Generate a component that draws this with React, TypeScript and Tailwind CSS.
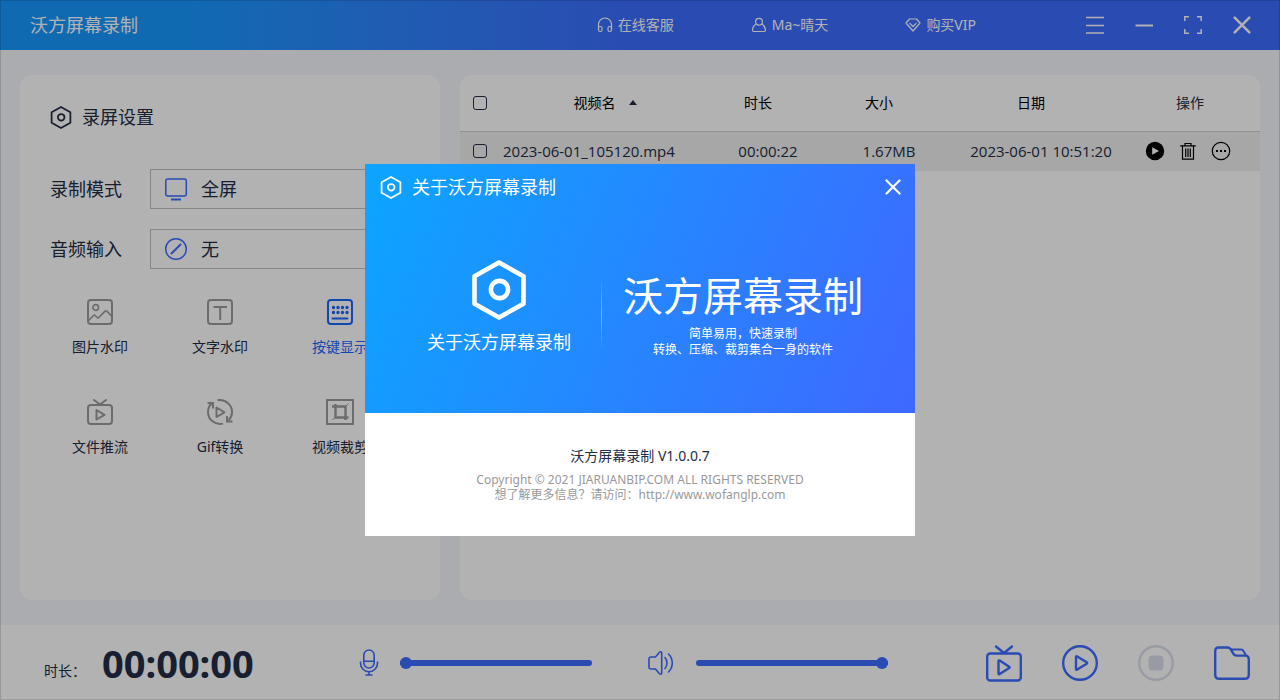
import { useState } from "react";
import type { ReactNode } from "react";

type IconProps = { className?: string };

const HexIcon = ({ className }: IconProps) => (
  <svg viewBox="0 0 54 60" fill="none" stroke="currentColor" className={className}>
    <path d="M27 2.5 51.5 16.2V43.8L27 57.5 2.5 43.8V16.2Z" strokeWidth="4.6" strokeLinejoin="round" />
    <circle cx="27.5" cy="29.5" r="8.6" strokeWidth="4.6" />
  </svg>
);

const HeadphonesIcon = () => (
  <svg viewBox="0 0 16 16" fill="none" stroke="currentColor" strokeWidth="1.2" className="size-4">
    <path d="M1.5 13V7.5a6.5 6.5 0 0 1 13 0V13" />
    <rect x="1.5" y="9.5" width="3.5" height="5" rx="1.5" />
    <rect x="11" y="9.5" width="3.5" height="5" rx="1.5" />
  </svg>
);

const UserIcon = () => (
  <svg viewBox="0 0 16 16" fill="none" stroke="currentColor" strokeWidth="1.2" className="size-4">
    <circle cx="8" cy="4.7" r="3.4" />
    <path d="M5.3 7C2.8 8.4 1.500 10.800 1.500 13.300c0 .8.4 1.200 1.200 1.200h10.600c.8 0 1.200-.4 1.200-1.200 0-2.500-1.300-4.900-3.800-6.300" />
  </svg>
);

const VipIcon = () => (
  <svg viewBox="0 0 16 16" fill="none" stroke="currentColor" strokeWidth="1.2" strokeLinejoin="round" className="size-4">
    <path d="M4.500 2h7L15 6 8 14 1 6Z" />
    <path d="M4.800 6.300 8 9.500l3.200-3.200" strokeLinecap="round" />
  </svg>
);

const MenuIcon = () => (
  <svg viewBox="0 0 20 20" stroke="currentColor" strokeWidth="1.500" className="size-5">
    <path d="M1 2.500h18M1 10.500h18M1 18h18" />
  </svg>
);

const MinimizeIcon = () => (
  <svg viewBox="0 0 20 20" stroke="currentColor" strokeWidth="2" className="size-5">
    <path d="M1.500 10.500h17.500" />
  </svg>
);

const MaximizeIcon = () => (
  <svg viewBox="0 0 20 20" fill="none" stroke="currentColor" strokeWidth="1.500" className="size-5">
    <path d="M1.800 6V1.800H6M14 1.800h4.200V6M18.200 14v4.200H14M6 18.200H1.800V14" />
  </svg>
);

const CloseIcon = ({ className }: IconProps) => (
  <svg viewBox="0 0 16 16" stroke="currentColor" strokeWidth="2.200" strokeLinecap="round" className={className}>
    <path d="M1.500 1.500 14.500 14.500M14.500 1.500 1.500 14.500" />
  </svg>
);

const ScreenIcon = () => (
  <svg viewBox="0 0 24 24" fill="none" stroke="currentColor" strokeWidth="1.500" className="size-6">
    <rect x="1.800" y="2" width="20.500" height="17" rx="2" />
    <path d="M7 22.500h10" strokeWidth="2" />
  </svg>
);

const NoneIcon = () => (
  <svg viewBox="0 0 24 24" fill="none" stroke="currentColor" strokeWidth="1.500" className="size-6">
    <circle cx="12" cy="12" r="10.300" />
    <path d="M7 17 17 7" strokeWidth="2" />
  </svg>
);

const ToolSvg = ({ children }: { children: ReactNode }) => (
  <svg
    viewBox="0 0 28 28"
    fill="none"
    stroke="currentColor"
    strokeWidth="2"
    strokeLinecap="round"
    strokeLinejoin="round"
    className="size-7"
  >
    {children}
  </svg>
);

const ImageMarkIcon = () => (
  <ToolSvg>
    <rect x="2" y="2" width="24" height="24" rx="3" />
    <circle cx="9.700" cy="9.500" r="2.800" strokeWidth="1.700" />
    <path d="M3 22l4.500-4.500c.6-.6 1-.6 1.700 0l2 2c.6.600 1 .600 1.600 0l6.300-6.300c.6-.6 1-.6 1.700 0L25.500 18" strokeWidth="1.700" />
  </ToolSvg>
);

const TextMarkIcon = () => (
  <ToolSvg>
    <rect x="2" y="2" width="24" height="24" rx="3" />
    <path d="M7.500 9h13.500M14.200 9v13" strokeLinecap="butt" />
  </ToolSvg>
);

const KeyboardIcon = () => (
  <ToolSvg>
    <rect x="2" y="2" width="24" height="24" rx="3" />
    <path d="M7.500 9.500h.01M12 9.500h.01M16.500 9.500h.01M21 9.500h.01M7.500 14.500h.01M12 14.500h.01M16.500 14.500h.01M21 14.500h.01" strokeWidth="3.400" />
    <path d="M6.500 20.500h15" />
  </ToolSvg>
);

const StreamIcon = () => (
  <ToolSvg>
    <rect x="2" y="7" width="24" height="19" rx="3" />
    <path d="M8 2l6 4.500L20 2" />
    <path d="M10.500 12v9.500l8-4.700Z" />
  </ToolSvg>
);

const GifIcon = () => (
  <ToolSvg>
    <path d="M11.500 2.200C19.500 1 26.200 7 26 14.500c-.1 3.200-1.500 6-3.500 8" strokeLinecap="butt" />
    <path d="M17 25.600C9 27.500 2 21.500 2 14c0-3.500 1.500-6.500 4-8.700" strokeLinecap="butt" />
    <path d="M1.500 5H7v5.500M26.500 23.500H21V18" strokeLinecap="butt" strokeLinejoin="miter" />
    <path d="M10.500 9.500v9.500l8-4.700Z" />
  </ToolSvg>
);

const CropIcon = () => (
  <svg viewBox="0 0 28 28" fill="none" stroke="currentColor" strokeWidth="2" className="size-7">
    <path d="M1 2h26v24H1Z" />
    <path d="M9.500 6v13.500h13M6 8.500h13.500V22" strokeWidth="2.400" />
    <path d="M18 10l4.500-4.500M6.500 22l4-4" strokeWidth="1" />
  </svg>
);

const PlayRowIcon = () => (
  <svg viewBox="0 0 20 20" className="size-5">
    <circle cx="10" cy="10" r="9.200" fill="black" />
    <path d="M7.200 6.300v7.400L14 10Z" fill="white" />
  </svg>
);

const TrashIcon = () => (
  <svg viewBox="0 0 20 20" fill="none" stroke="currentColor" strokeWidth="1.200" className="size-5">
    <path d="M2.200 4.800h15.600M7 4.500V2.500h6v2M4.500 5v13.200h11V5M7.700 7.500v8.500M10 7.500v8.500M12.300 7.500v8.500" />
  </svg>
);

const MoreIcon = () => (
  <svg viewBox="0 0 20 20" fill="none" stroke="currentColor" className="size-5">
    <circle cx="10" cy="10" r="8.700" strokeWidth="1.200" />
    <path d="M5 10h2M9 10h2M13 10h2" strokeWidth="2" />
  </svg>
);

const MicIcon = () => (
  <svg viewBox="0 0 20 28" fill="none" stroke="currentColor" strokeWidth="1.600" className="h-7 w-5">
    <rect x="4.800" y="1" width="10.400" height="18" rx="5.200" />
    <path d="M5 12.300h10M1.500 12.500v1.700a8.500 8.500 0 0 0 17 0V12.500M10 22.500v3.500M6.500 26h7" />
  </svg>
);

const SpeakerIcon = () => (
  <svg viewBox="0 0 28 26" fill="none" stroke="currentColor" strokeWidth="1.600" strokeLinejoin="round" className="h-[26px] w-7">
    <path d="M4 7h4.500L12.500 2.300c1-1 2.200-.7 2.200.7v20c0 1.400-1.200 1.700-2.200.7L8.500 19H4c-1.300 0-2-.7-2-2V9c0-1.300.7-2 2-2Z" />
    <path d="M18 7.500c2.600 3 2.600 8 0 11M21.500 4c5 5 5 13 0 18" strokeLinecap="round" />
  </svg>
);

const ActionSvg = ({ children }: { children: ReactNode }) => (
  <svg
    viewBox="0 0 38 38"
    fill="none"
    stroke="currentColor"
    strokeWidth="2.400"
    strokeLinecap="round"
    strokeLinejoin="round"
    className="size-[38px]"
  >
    {children}
  </svg>
);

const tools = [
  { label: "图片水印", icon: <ImageMarkIcon /> },
  { label: "文字水印", icon: <TextMarkIcon /> },
  { label: "按键显示", icon: <KeyboardIcon /> },
  { label: "文件推流", icon: <StreamIcon /> },
  { label: "Gif转换", icon: <GifIcon /> },
  { label: "视频裁剪", icon: <CropIcon /> },
];

const actions = [
  {
    label: "直播推流",
    icon: (
      <ActionSvg>
        <rect x="2.200" y="9.500" width="33.600" height="27" rx="3" />
        <path d="M11 2.500l8 6.500 8-6.500" />
        <path d="M13.500 17v12.500c0 .8.500 1 1.200.6l9.500-6c.6-.4.600-1 0-1.400l-9.500-6.100c-.7-.4-1.200-.2-1.200.4Z" />
      </ActionSvg>
    ),
  },
  {
    label: "开始录制",
    icon: (
      <ActionSvg>
        <circle cx="19" cy="19" r="16.800" />
        <path d="M15 13v12c0 .8.500 1 1.200.6l9.500-5.900c.6-.4.600-1 0-1.400l-9.500-5.900c-.7-.4-1.200-.2-1.200.6Z" />
      </ActionSvg>
    ),
  },
  {
    label: "停止录制",
    disabled: true,
    icon: (
      <ActionSvg>
        <circle cx="19" cy="19" r="16.800" />
        <rect x="11.500" y="11.500" width="15" height="15" rx="4" fill="currentColor" stroke="none" />
      </ActionSvg>
    ),
  },
  {
    label: "打开文件夹",
    icon: (
      <ActionSvg>
        <path d="M5.500 3.500h9c1.500 0 2.300.5 3.200 1.700L20.500 10c.8 1.200 1.600 1.600 3 1.600h8.700c2.400 0 3.600 1.200 3.600 3.600v15.600c0 2.700-1.300 4-4 4H6.200c-2.700 0-4-1.300-4-4V7c0-2.300 1-3.500 3.300-3.500Z" />
        <path d="M18 5.500h10c1.200 0 2 .5 2.500 1.500l2.500 4.500" strokeWidth="2" />
      </ActionSvg>
    ),
  },
];

const checkboxClass =
  "block size-[14px] appearance-none rounded-[3px] border border-[#222d46] checked:bg-[#3c6cff]";

const rangeClass =
  "h-3 w-48 appearance-none bg-transparent [&::-webkit-slider-runnable-track]:h-1.5 [&::-webkit-slider-runnable-track]:rounded-full [&::-webkit-slider-runnable-track]:bg-[#3c6cff] [&::-webkit-slider-thumb]:-mt-[3px] [&::-webkit-slider-thumb]:size-3 [&::-webkit-slider-thumb]:appearance-none [&::-webkit-slider-thumb]:rounded-full [&::-webkit-slider-thumb]:bg-[#3c6cff]";

const TitleBar = () => (
  <header className="flex h-[50px] shrink-0 items-center bg-linear-to-r from-[#1898ff] from-15% to-[#3c6cff] to-50% pr-3.5 pl-[30px] text-white">
    <h1 className="text-lg">沃方屏幕录制</h1>
    <nav className="mr-[95px] ml-auto flex gap-[77px] text-sm">
      <a href="#service" className="flex items-center gap-[5px]"><HeadphonesIcon />在线客服</a>
      <a href="#account" className="flex items-center gap-[5px]"><UserIcon />Ma~晴天</a>
      <a href="#vip" className="flex items-center gap-[5px]"><VipIcon />购买VIP</a>
    </nav>
    <div className="flex gap-px">
      <button aria-label="菜单" className="flex w-12 justify-center"><MenuIcon /></button>
      <button aria-label="最小化" className="flex w-12 justify-center"><MinimizeIcon /></button>
      <button aria-label="最大化" className="flex w-12 justify-center"><MaximizeIcon /></button>
      <button aria-label="关闭" className="flex w-12 items-center justify-center"><CloseIcon className="size-[18px]" /></button>
    </div>
  </header>
);

const SettingRow = ({ id, label, value, icon }: { id: string; label: string; value: string; icon: ReactNode }) => (
  <div className="flex items-center text-lg">
    <label htmlFor={id} className="w-[100px] shrink-0">{label}</label>
    <div className="flex h-10 flex-1 items-center gap-[13px] border border-[#c0c0c0] px-[13px]">
      <span className="text-[#3c6cff]">{icon}</span>
      <select id={id} className="flex-1 appearance-none bg-transparent">
        <option>{value}</option>
      </select>
    </div>
  </div>
);

const SettingsPanel = () => {
  const [active, setActive] = useState("按键显示");

  return (
    <section className="w-[420px] shrink-0 rounded-xl bg-white">
      <div className="px-[30px] pt-7">
        <h2 className="flex h-7 items-center gap-2.5 text-lg">
          <HexIcon className="h-[23px] w-[22px]" />
          录屏设置
        </h2>
        <div className="mt-[38px] flex flex-col gap-5">
          <SettingRow id="mode" label="录制模式" value="全屏" icon={<ScreenIcon />} />
          <SettingRow id="audio" label="音频输入" value="无" icon={<NoneIcon />} />
        </div>
      </div>
      <div className="mt-[29px] grid grid-cols-3 gap-y-10 pr-10 pl-5">
        {tools.map((tool) => (
          <button
            key={tool.label}
            onClick={() => setActive(tool.label)}
            className={`flex h-[60px] flex-col items-center gap-[11px] text-sm ${
              tool.label === active ? "text-[#1a66ff]" : ""
            }`}
          >
            <span className={tool.label === active ? "" : "text-[#9b9b9b]"}>{tool.icon}</span>
            {tool.label}
          </button>
        ))}
      </div>
    </section>
  );
};

const VideoTable = () => (
  <section className="flex-1 overflow-hidden rounded-xl bg-white">
    <table className="w-full table-fixed">
      <colgroup>
        <col className="w-[40px]" />
        <col className="w-[210px]" />
        <col className="w-[116px]" />
        <col className="w-[126px]" />
        <col className="w-[178px]" />
        <col className="w-[130px]" />
      </colgroup>
      <thead>
        <tr className="h-14 border-b border-[#d2d2d2] text-sm text-black [&>th]:font-normal">
          <th className="pl-[13px]"><input type="checkbox" aria-label="全选" className={checkboxClass} /></th>
          <th>
            <button className="inline-flex items-center gap-[13px]">
              视频名
              <svg viewBox="0 0 8 5" fill="#222d46" className="h-[5px] w-2"><path d="M4 0l4 5H0Z" /></svg>
            </button>
          </th>
          <th className="pr-5">时长</th>
          <th className="pr-5">大小</th>
          <th className="pr-5">日期</th>
          <th className="pr-2.5 text-[#222d46]">操作</th>
        </tr>
      </thead>
      <tbody className="font-['Open_Sans',sans-serif]">
        <tr className="h-10 bg-[#efefef] text-center text-[15px]">
          <td className="pl-[13px]"><input type="checkbox" aria-label="2023-06-01_105120.mp4" className={checkboxClass} /></td>
          <td className="pl-[3px] text-left">2023-06-01_105120.mp4</td>
          <td>00:00:22</td>
          <td>1.67MB</td>
          <td>2023-06-01 10:51:20</td>
          <td className="pr-3.5">
            <div className="flex justify-center gap-[13px] text-black">
              <button aria-label="播放"><PlayRowIcon /></button>
              <button aria-label="删除"><TrashIcon /></button>
              <button aria-label="更多"><MoreIcon /></button>
            </div>
          </td>
        </tr>
      </tbody>
    </table>
  </section>
);

const ControlBar = () => (
  <footer className="flex h-[75px] shrink-0 items-center bg-white pr-[29px] pl-11">
    <div className="flex w-[315px] shrink-0 items-center gap-4">
      <span className="pt-4 text-sm">时长：</span>
      <time className="text-[38px] leading-[50px] font-bold">00:00:00</time>
    </div>
    <label className="flex items-center gap-[21px] text-[#3c6cff]">
      <MicIcon />
      <input type="range" aria-label="麦克风音量" defaultValue={0} className={rangeClass} />
    </label>
    <label className="ml-[55px] flex items-center gap-[21px] text-[#3c6cff]">
      <SpeakerIcon />
      <input type="range" aria-label="扬声器音量" defaultValue={100} className={rangeClass} />
    </label>
    <div className="ml-auto flex gap-[38px] text-[#3c6cff]">
      {actions.map((action) => (
        <button key={action.label} aria-label={action.label} disabled={action.disabled} className="disabled:text-[#dadfea]">
          {action.icon}
        </button>
      ))}
    </div>
  </footer>
);

const AboutDialog = ({ onClose }: { onClose: () => void }) => (
  <div className="fixed inset-0 flex items-center justify-center border border-black/15 bg-black/30">
    <div role="dialog" aria-labelledby="about-title" className="w-[550px] bg-white">
      <div className="h-[249px] bg-linear-[112deg] from-[#0ca5ff] to-[#3f68ff] text-white">
        <div className="flex h-[46px] items-center gap-2.5 pr-3.5 pl-[15px]">
          <HexIcon className="h-[23px] w-[22px]" />
          <h2 id="about-title" className="text-lg">关于沃方屏幕录制</h2>
          <button aria-label="关闭" onClick={onClose} className="ml-auto"><CloseIcon className="size-4" /></button>
        </div>
        <div className="flex items-center justify-center pt-12 pl-2.5">
          <div className="flex flex-col items-center gap-2">
            <HexIcon className="h-[60px] w-[54px]" />
            <p className="text-lg">关于沃方屏幕录制</p>
          </div>
          <div className="mt-3 mr-[21px] ml-[30px] h-[72px] w-px bg-linear-to-b from-white/0 via-white/40 to-white/0" />
          <div className="pt-2 text-center text-xs leading-4">
            <p className="text-[40px] leading-[60px]">沃方屏幕录制</p>
            <p>简单易用，快速录制</p>
            <p>转换、压缩、裁剪集合一身的软件</p>
          </div>
        </div>
      </div>
      <div className="h-[123px] pt-8 text-center">
        <p className="text-sm leading-[22px]">沃方屏幕录制 V1.0.0.7</p>
        <div className="mt-[5px] text-xs leading-[15px] text-[#999]">
          <p>Copyright © 2021 JIARUANBIP.COM ALL RIGHTS RESERVED</p>
          <p>想了解更多信息？请访问：<a href="#site">http://www.wofanglp.com</a></p>
        </div>
      </div>
    </div>
  </div>
);

export default function App() {
  const [aboutOpen, setAboutOpen] = useState(true);

  return (
    <div className="flex min-h-screen flex-col bg-[#f4f6fd] font-['Noto_Sans','Noto_Sans_CJK_SC',sans-serif] text-[#222d46]">
      <TitleBar />
      <main className="flex flex-1 gap-5 px-5 py-[25px]">
        <SettingsPanel />
        <VideoTable />
      </main>
      <ControlBar />
      {aboutOpen && <AboutDialog onClose={() => setAboutOpen(false)} />}
    </div>
  );
}
